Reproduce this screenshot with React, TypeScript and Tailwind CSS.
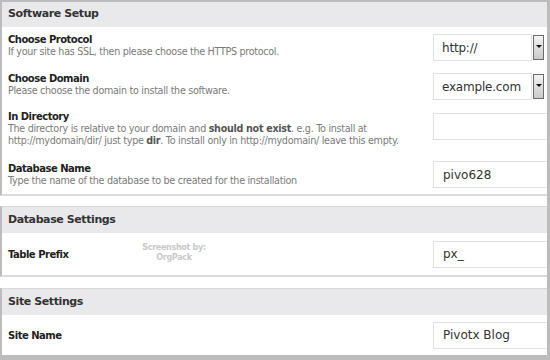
import { ReactNode } from 'react'

const font = { fontFamily: '"DejaVu Sans", Verdana, sans-serif' }

function Header({ children, tall }: { children: ReactNode; tall?: boolean }) {
  return (
    <div className={`${tall ? 'h-[26px]' : 'h-[25px]'} bg-[#e9e9eb] flex items-center pl-[6px] text-[11px] font-bold text-[#333] tracking-[-0.4px]`}>
      {children}
    </div>
  )
}

function TextBox({ value }: { value?: string }) {
  return (
    <div className="w-[140px] h-[27px] border border-[#e2e2e2] bg-white flex items-center pl-[9px] text-[12px] text-[#333] shrink-0">
      {value}
    </div>
  )
}

function SelectBox({ value }: { value: string }) {
  return (
    <div className="flex items-center gap-[1px] shrink-0">
      <div className="w-[99px] h-[27px] border border-[#e2e2e2] bg-white flex items-center pl-[8px] text-[12px] text-[#333] tracking-[-0.2px]">
        {value}
      </div>
      <div className="w-[11px] h-[25px] border border-[#6b6b6b] bg-gradient-to-b from-[#f4f4f4] to-[#c9c9c9] flex items-center justify-center">
        <div className="w-0 h-0 border-l-[3px] border-r-[3px] border-t-[3px] border-l-transparent border-r-transparent border-t-[#111] mb-[2px]" />
      </div>
    </div>
  )
}

function Row({
  title, desc, control, className,
}: { title: string; desc?: ReactNode; control: ReactNode; className: string }) {
  return (
    <div className={`flex items-start ${className}`}>
      <div className="flex-1 pl-[6px] min-w-0">
        <div className="text-[10px] leading-[12px] font-bold text-[#222] tracking-[-0.5px]">{title}</div>
        {desc && (
          <div className="text-[9.6px] leading-[11.5px] text-[#7a7a7a] tracking-[-0.3px]">{desc}</div>
        )}
      </div>
      <div className="w-[114px] shrink-0">{control}</div>
    </div>
  )
}

export default function App() {
  return (
    <div style={font} className="w-[550px] h-[360px] bg-white overflow-hidden border-r-[3px] border-[#bcbcbc] flex flex-col">
      <div className="border-l-2 border-t-2 border-[#bcbcbc] border-b-2 border-b-[#dcdcdc] overflow-hidden shrink-0">
        <Header>Software Setup</Header>
        <Row className="h-[39px] pt-[7px]" title="Choose Protocol"
          desc="If your site has SSL, then please choose the HTTPS protocol."
          control={<SelectBox value="http://" />} />
        <Row className="h-[39px] pt-[7px]" title="Choose Domain"
          desc="Please choose the domain to install the software."
          control={<SelectBox value="example.com" />} />
        <Row className="h-[48px] pt-[6px]" title="In Directory"
          desc={<>The directory is relative to your domain and <b className="text-[#555]">should not exist</b>. e.g. To install at<br />http://mydomain/dir/ just type <b className="text-[#555]">dir</b>. To install only in http://mydomain/ leave this empty.</>}
          control={<div className="pt-[2px]"><TextBox /></div>} />
        <Row className="h-[41px] pt-[10px]" title="Database Name"
          desc="Type the name of the database to be created for the installation"
          control={<div className="-mt-[2px]"><TextBox value="pivo628" /></div>} />
      </div>

      <div className="h-[10px] shrink-0" />

      <div className="border-l-2 border-[#bcbcbc] border-t border-t-[#d6d6d6] border-b-2 border-b-[#dcdcdc] overflow-hidden shrink-0">
        <Header tall>Database Settings</Header>
        <div className="h-[42px] flex items-center">
          <div className="w-[135px] pl-[6px] text-[10px] font-bold text-[#222] tracking-[-0.5px]">Table Prefix</div>
          <div className="w-[74px] flex flex-col items-center text-[8px] leading-[10px] font-bold text-[#c9c9c9] tracking-[-0.3px] -mt-[2px]">
            <span>Screenshot by:</span>
            <span>OrgPack</span>
          </div>
          <div className="flex-1" />
          <div className="w-[114px] shrink-0"><TextBox value="px_" /></div>
        </div>
      </div>

      <div className="h-[11px] shrink-0" />

      <div className="flex-1 border-l-2 border-[#bcbcbc] border-t border-t-[#d6d6d6] border-b-[5px] border-b-[#bcbcbc] overflow-hidden">
        <Header tall>Site Settings</Header>
        <div className="h-[40px] flex items-center">
          <div className="flex-1 pl-[6px] text-[10px] font-bold text-[#222] tracking-[-0.5px]">Site Name</div>
          <div className="w-[114px] shrink-0"><TextBox value="Pivotx Blog" /></div>
        </div>
      </div>
    </div>
  )
}
